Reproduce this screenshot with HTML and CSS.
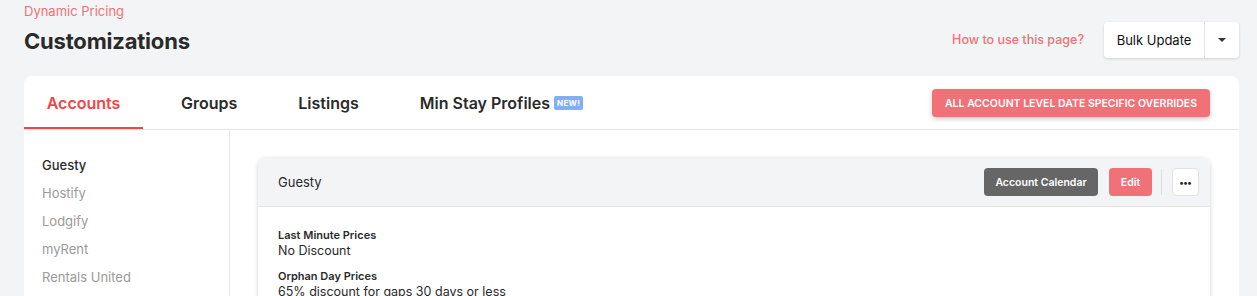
FILE: index.html
```html
<!DOCTYPE html>
<html>

<head>
    <link rel="stylesheet" href="styles.css">
</head>

<body>
    <div class="page">
        <!-- Page header -->
        <div class="page-header">
            <div>
                <div class="crumb">Dynamic Pricing</div>
                <h1>Customizations</h1>
            </div>
            <div class="header-actions">
                <a class="help-link" href="#">How to use this page?</a>
                <div class="split-btn">
                    <button class="split-main">Bulk Update</button>
                    <button class="split-caret"><span class="caret"></span></button>
                </div>
            </div>
        </div>

        <!-- Main card -->
        <div class="card">
            <div class="tabs">
                <div class="tab active">Accounts</div>
                <div class="tab">Groups</div>
                <div class="tab">Listings</div>
                <div class="tab">Min Stay Profiles <span class="badge">NEW!</span></div>
                <button class="btn-overrides">All account level date specific overrides</button>
            </div>

            <div class="card-body">
                <ul class="sidebar">
                    <li class="selected">Guesty</li>
                    <li>Hostify</li>
                    <li>Lodgify</li>
                    <li>myRent</li>
                    <li>Rentals United</li>
                </ul>

                <div class="content">
                    <div class="account-card">
                        <div class="account-head">
                            <span class="account-name">Guesty</span>
                            <div class="account-actions">
                                <button class="btn-dark">Account Calendar</button>
                                <button class="btn-edit">Edit</button>
                                <span class="divider"></span>
                                <button class="btn-more">&bull;&bull;&bull;</button>
                            </div>
                        </div>
                        <div class="account-body">
                            <div class="field">
                                <div class="field-label">Last Minute Prices</div>
                                <div class="field-value">No Discount</div>
                            </div>
                            <div class="field">
                                <div class="field-label">Orphan Day Prices</div>
                                <div class="field-value">65% discount for gaps 30 days or less</div>
                            </div>
                        </div>
                    </div>
                </div>
            </div>
        </div>
    </div>
</body>

</html>
```

FILE: styles.css
```css
body {
    margin: 0;
    font-family: 'Inter', 'Noto Sans', sans-serif;
    background-color: #f3f4f6;
    color: #2b2b2b;
    overflow: hidden;
}

.page {
    padding: 0 18px 0 24px;
}

.page-header {
    display: flex;
    justify-content: space-between;
    align-items: flex-start;
    height: 76px;
}

.crumb {
    font-size: 13px;
    color: #f07178;
    padding-top: 3px;
    line-height: 16px;
}

h1 {
    font-size: 22px;
    font-weight: 700;
    margin: 9px 0 0 0;
    line-height: 26px;
    color: #2a2a2a;
    letter-spacing: -0.2px;
}

.header-actions {
    display: flex;
    align-items: center;
    margin-top: 22px;
}

.help-link {
    font-size: 12.5px;
    font-weight: 500;
    color: #f07178;
    text-decoration: none;
    margin-right: 20px;
    margin-top: -2px;
}

.split-btn {
    display: flex;
    background: #fff;
    border-radius: 4px;
    box-shadow: 0 1px 3px rgba(0, 0, 0, 0.15);
    height: 36px;
}

button {
    font-family: inherit;
    border: none;
    cursor: pointer;
}

.split-main {
    background: transparent;
    font-size: 13px;
    color: #111;
    width: 101px;
    padding: 0;
    border-right: 1px solid #e3e3e3;
}

.split-caret {
    background: transparent;
    width: 34px;
    display: flex;
    align-items: center;
    justify-content: center;
}

.caret {
    width: 0;
    height: 0;
    border-left: 4px solid transparent;
    border-right: 4px solid transparent;
    border-top: 4px solid #333;
}

.card {
    background: #fff;
    border-radius: 8px;
    height: 240px;
    overflow: hidden;
}

.tabs {
    display: flex;
    align-items: center;
    height: 53px;
    border-bottom: 1px solid #e5e5e5;
    padding-right: 29px;
}

.tab {
    font-size: 16px;
    font-weight: 600;
    color: #2a2a2a;
    height: 53px;
    display: flex;
    align-items: center;
    box-sizing: border-box;
    padding-top: 1px;
}

.tab:nth-child(1) {
    width: 119px;
    justify-content: center;
}

.tab:nth-child(2) {
    margin-left: 38px;
}

.tab:nth-child(3) {
    margin-left: 61px;
}

.tab:nth-child(4) {
    margin-left: 61px;
}

.tab.active {
    color: #f44545;
    border-bottom: 2px solid #f44545;
    padding-top: 3px;
}

.badge {
    font-size: 8px;
    font-weight: 700;
    color: #fff;
    background: #7fb0f5;
    border-radius: 2px;
    padding: 2px 3px;
    margin-left: 4px;
    letter-spacing: 0.3px;
}

.btn-overrides {
    margin-left: auto;
    background: #f07178;
    color: #fff;
    font-size: 10.5px;
    font-weight: 600;
    text-transform: uppercase;
    height: 28px;
    width: 278px;
    padding: 0;
    border-radius: 4px;
    box-shadow: 0 2px 5px rgba(0, 0, 0, 0.2);
    margin-top: 1px;
}

.card-body {
    display: flex;
    height: 200px;
}

.sidebar {
    list-style-type: none;
    margin: 0;
    padding: 21px 0 0 18px;
    width: 187px;
    border-right: 1px solid #e5e5e5;
}

.sidebar li {
    font-size: 13px;
    color: #9a9a9a;
    height: 28px;
    line-height: 28px;
}

.sidebar li.selected {
    color: #2a2a2a;
    font-weight: 500;
}

.content {
    flex: 1;
    padding: 28px 29px 0 28px;
}

.account-card {
    border-radius: 8px;
    box-shadow: 0 1px 5px rgba(0, 0, 0, 0.18);
    height: 160px;
    overflow: hidden;
}

.account-head {
    display: flex;
    justify-content: space-between;
    align-items: center;
    background: #f3f4f6;
    height: 48px;
    border-bottom: 1px solid #e2e2e2;
    padding: 0 11px 0 20px;
}

.account-name {
    font-size: 13px;
    color: #2a2a2a;
}

.account-actions {
    display: flex;
    align-items: center;
}

.btn-dark {
    background: #666;
    color: #fff;
    font-size: 10.5px;
    font-weight: 600;
    height: 28px;
    width: 114px;
    border-radius: 4px;
}

.btn-edit {
    background: #f07178;
    color: #fff;
    font-size: 10.5px;
    font-weight: 600;
    height: 28px;
    width: 43px;
    border-radius: 4px;
    margin-left: 11px;
}

.divider {
    width: 1px;
    height: 26px;
    background: #ddd;
    margin: 0 10px 0 9px;
}

.btn-more {
    background: #fff;
    border: 1px solid #e2e2e2;
    border-radius: 4px;
    width: 27px;
    height: 28px;
    font-size: 9px;
    color: #222;
    letter-spacing: -1px;
    padding: 0 1px 0 0;
}

.account-body {
    padding: 21px 20px 0 20px;
}

.field {
    margin-bottom: 9px;
}

.field-label {
    font-size: 11px;
    font-weight: 600;
    color: #2a2a2a;
    line-height: 14px;
}

.field-value {
    font-size: 12.5px;
    color: #2a2a2a;
    line-height: 18px;
}
```
